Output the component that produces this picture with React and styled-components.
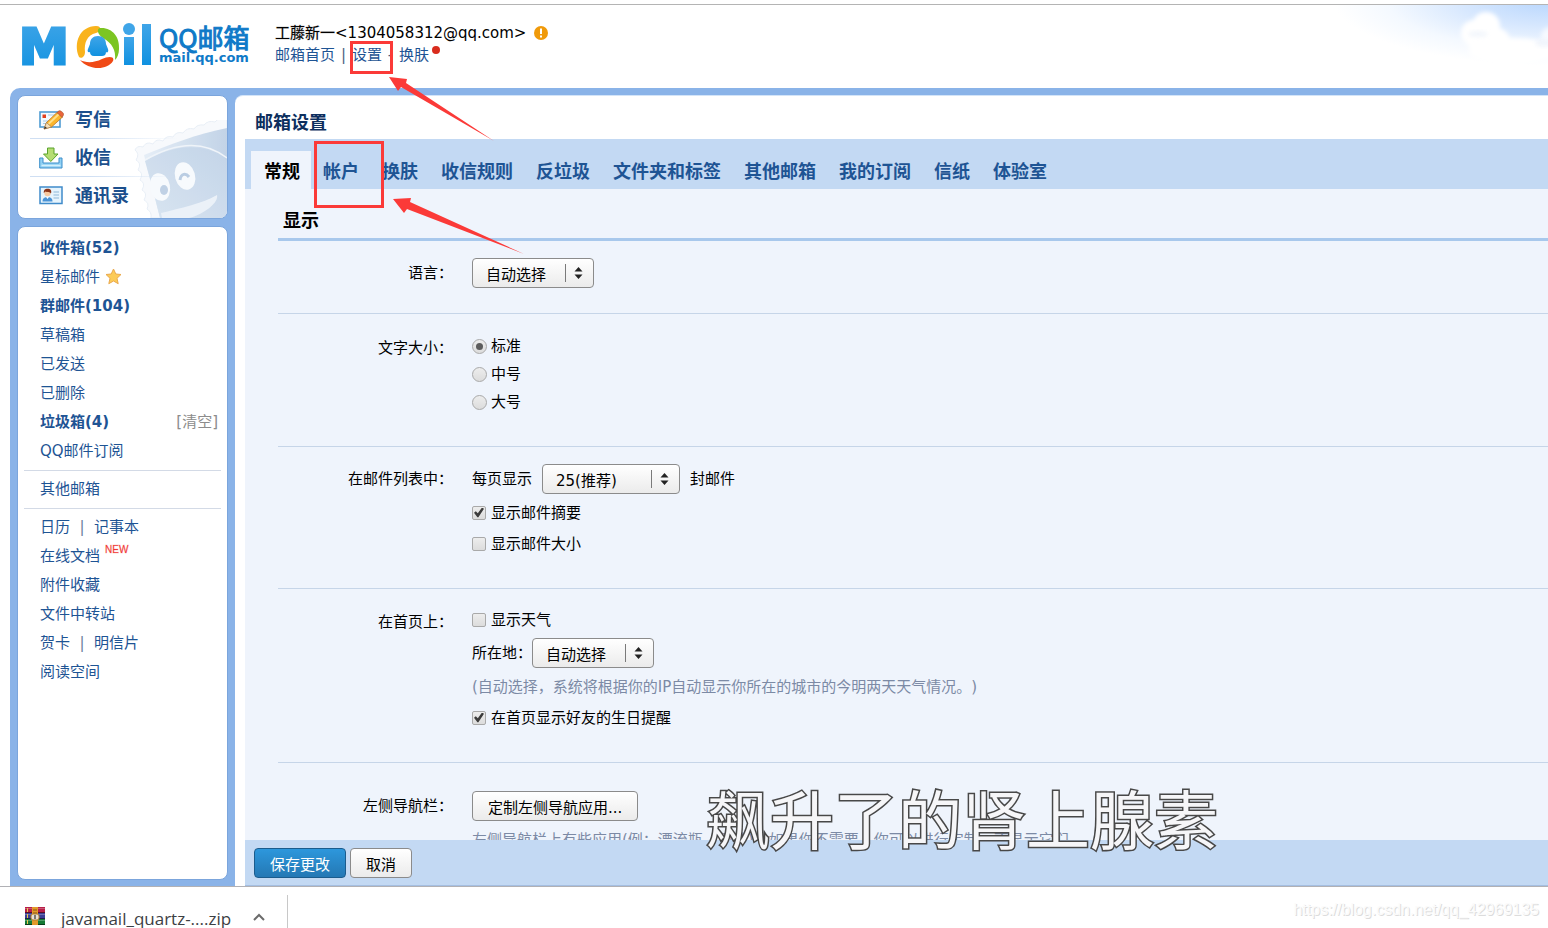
import React from "react";
import styled, { createGlobalStyle } from "styled-components";

const sans = `"DejaVu Sans", "Noto Sans CJK SC", sans-serif`;
const link = "#1e5494";

const GlobalStyle = createGlobalStyle`
  * { box-sizing: border-box; }
  html, body { margin: 0; padding: 0; background: #fff; }
  body { font-family: ${sans}; font-size: 15px; line-height: 22px; color: #000; overflow: hidden; text-spacing-trim: space-all; }
  button, select, input { font-family: inherit; font-size: inherit; margin: 0; }
  ul { list-style: none; margin: 0; padding: 0; }
  h1, h2, p { margin: 0; }
`;

const Page = styled.div`
  position: relative;
  height: 100vh;
  display: flex;
  flex-direction: column;
  padding-top: 4px;
`;

/* header */
const Header = styled.header`
  position: relative;
  display: flex;
  gap: 24px;
  height: 84px;
  flex: none;
  padding: 17px 0 0 20px;
  border-top: 1px solid #b4b4b4;
`;
const Sky = styled.svg`
  position: absolute;
  top: 0;
  right: 0;
  width: 220px;
  height: 70px;
`;
const Logo = styled.a`
  position: relative;
  display: flex;
  gap: 7px;
  width: 231px;
  text-decoration: none;
  color: #0f7ac8;
`;
const LogoWords = styled.span`
  display: flex;
  flex-direction: column;
  white-space: nowrap;
`;
const LogoName = styled.span`
  font: 400 26px/29px "Noto Sans CJK SC", sans-serif;
  -webkit-text-stroke: 1px #0f7ac8;
`;
const LogoHost = styled.span`
  font: bold 13px/14px ${sans};
`;
const Account = styled.div`
  position: relative;
  display: flex;
  flex-direction: column;
`;
const AccountLine = styled.div`
  display: flex;
  align-items: center;
  height: 22px;
  white-space: nowrap;
`;
const Nickname = styled.span`
  -webkit-text-stroke: 1px #00000033;
`;
const WarnIcon = styled.svg`
  margin-left: 8px;
`;
const TextLink = styled.a`
  color: ${(p) => (p.$muted ? "#8c8c8c" : link)};
  font-weight: ${(p) => (p.$bold ? "bold" : "normal")};
  text-decoration: none;
  white-space: nowrap;
`;
const Sep = styled.span`
  width: 17px;
  text-align: center;
  color: #4a5e82;
`;
const RedDot = styled.span`
  width: 8px;
  height: 8px;
  margin: 0 0 10px 3px;
  border-radius: 50%;
  background: #d92c1d;
`;

/* frame */
const Frame = styled.div`
  flex: 1;
  min-height: 0;
  display: flex;
  margin-left: 10px;
  padding-top: 7px;
  background: #8ab3e8;
  border-top-left-radius: 10px;
`;
const Sidebar = styled.aside`
  width: 225px;
  flex: none;
  display: flex;
  flex-direction: column;
  gap: 7px;
  padding: 0 7px 6px;
`;
const Panel = styled.div`
  position: relative;
  background: #fff;
  border: 1px solid #7ba5dc;
  border-radius: 8px;
  overflow: hidden;
`;
const ActionPanel = styled(Panel)`
  height: 124px;
  flex: none;
  padding: 5px 0 0 12px;
`;
const Stamp = styled.svg`
  position: absolute;
  right: 0;
  bottom: 0;
  opacity: 0.9;
`;
const Action = styled.a`
  position: relative;
  display: flex;
  align-items: center;
  gap: 11px;
  height: 38px;
  padding-left: 9px;
  font-size: 18px;
  font-weight: bold;
  color: #1c4f8c;
  text-decoration: none;
  border-bottom: 1px solid transparent;
  border-image: ${(p) => (p.$last ? "none" : "linear-gradient(90deg, #cfdff3 30%, transparent 75%) 1")};
`;
const FolderPanel = styled(Panel)`
  flex: 1;
  padding: 6px;
`;
const FolderGroup = styled.ul`
  & + & {
    margin-top: 5px;
    padding-top: 3px;
    border-top: 1px solid #d3dae6;
  }
`;
const Folder = styled.li`
  display: flex;
  align-items: center;
  height: 29px;
  padding: 0 3px 0 16px;
`;
const Spacer = styled.span`
  flex: 1;
`;
const Pipe = styled.span`
  width: 24px;
  text-align: center;
  color: #6d7f9c;
`;
const NewTag = styled.sup`
  margin: 0 0 12px 5px;
  font: 10px/12px "Liberation Sans", sans-serif;
  color: #f03a34;
  -webkit-text-stroke: 1px #f03a3433;
`;

/* settings */
const Main = styled.main`
  flex: 1;
  min-width: 0;
  display: flex;
  flex-direction: column;
  padding-left: 10px;
  background: #fff;
  border-top: 1px solid #d3e4f8;
  border-top-left-radius: 8px;
`;
const Title = styled.h1`
  padding: 10px 0 0 10px;
  height: 43px;
  flex: none;
  font-size: 18px;
  line-height: 33px;
  color: #0d2f5e;
`;
const Tabs = styled.nav`
  display: flex;
  align-items: flex-end;
  height: 50px;
  flex: none;
  padding-left: 6px;
  background: #c3d9f3;
`;
const Tab = styled.a`
  height: 38px;
  padding: 0 11px 0 13px;
  margin-right: -1px;
  font-size: 18px;
  line-height: 41px;
  font-weight: bold;
  white-space: nowrap;
  text-decoration: none;
  color: ${(p) => (p.$active ? "#000" : link)};
  background: ${(p) => (p.$active ? "#eff4fc" : "transparent")};
`;
const Scroll = styled.div`
  flex: 1;
  min-height: 0;
  overflow: hidden;
  padding-left: 33px;
  background: #eff4fc;
`;
const SectionTitle = styled.h2`
  height: 52px;
  padding: 15px 0 0 5px;
  font-size: 18px;
  line-height: 34px;
  border-bottom: 3px solid #a8c8ec;
`;
const Row = styled.section`
  display: flex;
  gap: 19px;
  padding: ${(p) => p.$top}px 0 ${(p) => p.$bottom}px;
  border-bottom: 1px solid #c6d5e8;
`;
const RowLabel = styled.div`
  width: 175px;
  flex: none;
  text-align: right;
  line-height: 37px;
`;
const Fields = styled.div`
  flex: 1;
  min-width: 0;
  padding-top: ${(p) => p.$offset || 0}px;
`;
const Line = styled.div`
  display: flex;
  align-items: center;
  height: ${(p) => p.$h || 31}px;
  white-space: nowrap;
`;
const Hint = styled(Line).attrs({ as: "p" })`
  color: #7c8aa5;
`;
const Choice = styled.label`
  display: flex;
  align-items: center;
  gap: ${(p) => (p.$radio ? 4 : 5)}px;
  line-height: 24px;
`;
const Radio = styled.input.attrs({ type: "radio" })`
  appearance: none;
  width: 15px;
  height: 15px;
  border: 1px solid #a9a9a9;
  border-radius: 50%;
  background: linear-gradient(#ededed, #dcdcdc);
  display: grid;
  place-items: center;
  &:checked::before {
    content: "";
    width: 7px;
    height: 7px;
    border-radius: 50%;
    background: #5c5c5c;
  }
`;
const Check = styled.input.attrs({ type: "checkbox" })`
  appearance: none;
  width: 14px;
  height: 14px;
  border: 1px solid #a9a9a9;
  border-radius: 2px;
  background: linear-gradient(#ededed, #dcdcdc);
  display: grid;
  place-items: center;
  &:checked::before {
    content: "";
    width: 10px;
    height: 10px;
    background: #3c3c3c;
    clip-path: polygon(0 52%, 18% 38%, 38% 58%, 80% 0, 100% 12%, 44% 98%, 34% 98%);
  }
`;
const Picker = styled.span`
  position: relative;
  width: ${(p) => p.$w}px;
  margin: 0 10px 0 ${(p) => (p.$after ? 10 : 0)}px;
`;
const Select = styled.select`
  appearance: none;
  display: block;
  width: 100%;
  height: 30px;
  padding: 3px 32px 0 13px;
  line-height: 26px;
  color: #000;
  border: 1px solid #8b8b8b;
  border-radius: 4px;
  background: linear-gradient(#fff, #ebebeb);
`;
const PickerMark = styled.svg`
  position: absolute;
  top: 6px;
  right: 10px;
  pointer-events: none;
`;
const Button = styled.button`
  height: 30px;
  padding: 4px 15px 0;
  line-height: 25px;
  border-radius: 4px;
  white-space: nowrap;
  color: ${(p) => (p.$primary ? "#fff" : "#000")};
  border: 1px solid ${(p) => (p.$primary ? "#1b5c8d" : "#8b8b8b")};
  background: ${(p) => (p.$primary ? "linear-gradient(#2d97dc, #2478b4)" : "linear-gradient(#fff, #ebebeb)")};
`;
const Toolbar = styled.div`
  display: flex;
  gap: 4px;
  height: 46px;
  flex: none;
  padding: 8px 9px;
  background: #c3d9f3;
  border-bottom: 1px solid #a5bfe2;
`;

/* browser download shelf */
const Shelf = styled.footer`
  display: flex;
  height: 42px;
  flex: none;
  overflow: hidden;
  border-top: 1px solid #b1b1b5;
  background: #fff;
`;
const Download = styled.button`
  display: flex;
  align-items: flex-start;
  width: 288px;
  height: 60px;
  margin-top: 8px;
  padding: 11px 0 0 25px;
  border: 0;
  border-right: 1px solid #c8c8c8;
  background: none;
  font: 17px/26px "Open Sans", "Noto Sans", sans-serif;
  color: #3c4043;
  text-align: left;
`;
const FileName = styled.span`
  width: 168px;
  margin-left: 16px;
  white-space: nowrap;
`;
const Chevron = styled.svg`
  margin: 6px 0 0 23px;
`;

/* things drawn over the page */
const Marks = styled.svg`
  position: absolute;
  left: 0;
  top: 0;
  pointer-events: none;
`;
const Caption = styled.div`
  position: absolute;
  left: 706px;
  bottom: 64px;
  font: 64px/96px "Noto Sans CJK SC", sans-serif;
  white-space: nowrap;
  color: #f6f6f8;
  paint-order: stroke fill;
  -webkit-text-stroke: 3px #484848;
  pointer-events: none;
`;
const Credit = styled.div`
  position: absolute;
  right: 9px;
  bottom: 7px;
  font: 16px/22px "Liberation Sans", sans-serif;
  color: #fbfbfb;
  text-shadow: 1px 1px 0 #dcdcdc;
`;

const MailMark = () => (
  <svg width="132" height="48" viewBox="0 0 132 48" aria-hidden="true">
    <defs>
      <linearGradient id="mk" x1="0" y1="0" x2="0" y2="1">
        <stop offset="0" stopColor="#3fa5e8" />
        <stop offset="1" stopColor="#1091e0" />
      </linearGradient>
    </defs>
    <text x="-1" y="42" fontFamily="DejaVu Sans, sans-serif" fontWeight="bold" fontSize="50" fill="url(#mk)" stroke="url(#mk)" strokeWidth="3">M</text>
    <circle cx="78" cy="24" r="25" fill="#fff" />
    <path d="M59 35C53 21 60 4 76 4C83 4 80 10 76 11C67 13 64 21 65 30C65 35 61 37 59 35Z" fill="#f9b31c" />
    <path d="M80 6C92 5 100 15 99 27C99 32 97 36 95 38C96 28 92 21 83 16C78 13 76 7 80 6Z" fill="#7cc522" />
    <path d="M60 38C66 41 74 41 82 37C88 34 95 34 93 39C87 49 68 48 60 38Z" fill="#f04a16" />
    <path d="M78 14C83 14 86 17 86 22L88 27C89 30 87 31 86 30C86 33 84 34 82 34H74C71 34 70 32 70 30C68 31 67 29 68 27L70 22C70 17 73 14 78 14Z" fill="url(#mk)" />
    <circle cx="109" cy="7" r="6" fill="#3fa5e8" />
    <rect x="104" y="15" width="10" height="28" fill="url(#mk)" />
    <rect x="122" y="2" width="9" height="41" fill="url(#mk)" />
  </svg>
);

const ComposeIcon = () => (
  <svg width="25" height="20" viewBox="0 0 25 20" aria-hidden="true">
    <rect x="1" y="2" width="20" height="15" fill="#f4fafe" stroke="#4f9cd3" strokeWidth="1.6" />
    <rect x="3.500" y="4.500" width="3.500" height="3.500" fill="#e2401e" />
    <path d="M9 5h7M4 11h5M4 13.500h4" stroke="#a9cbe6" />
    <path d="M5 19L7.500 12.500L18 2.500L23.500 7L12.500 17Z" fill="#fbb62d" stroke="#bb7423" strokeWidth=".8" />
    <path d="M9.500 14L20 4" stroke="#ffe08a" strokeWidth="1.800" />
    <path d="M18 2.500L20 .8C21 0 25.500 3 24.500 5L23 7.500Z" fill="#e9653c" stroke="#a3542d" strokeWidth=".6" />
    <path d="M5 19L7.500 12.500L12.500 17Z" fill="#f6dfb8" stroke="#977044" strokeWidth=".6" />
    <path d="M5 19L6 16.500L8 18Z" fill="#333" />
  </svg>
);
const InboxIcon = () => (
  <svg width="25" height="22" viewBox="0 0 25 22" aria-hidden="true">
    <path d="M.7 11H4V16H20V11H23V21H.7Z" fill="#8fd0f3" stroke="#3c8fcb" />
    <path d="M2.500 18.500H21.500" stroke="#d4effc" strokeWidth="1.500" />
    <path d="M8.500 1H15V7H19L11.800 14.500L4.500 7H8.500Z" fill="#b5dd73" stroke="#5aa32c" />
  </svg>
);
const ContactsIcon = () => (
  <svg width="25" height="19" viewBox="0 0 25 19" aria-hidden="true">
    <rect x="1" y="1" width="22" height="16.500" fill="#e6f4fd" stroke="#3f8bca" strokeWidth="1.500" />
    <circle cx="8.500" cy="7" r="3.200" fill="#f7c9a0" />
    <path d="M4.800 7C4.500 3 7 2.500 9 2.700C12 2.700 12.800 5 12 7.500C11 5.500 8 6.500 6.500 5.500Z" fill="#8b3418" />
    <path d="M3.500 15.500C3.500 12 6 11 8.500 11S13.500 12 13.500 15.500Z" fill="#4a93d6" />
    <path d="M7 11L8.500 13L10 11Z" fill="#fff" />
    <path d="M14.500 6H20M14.500 9H20M14.500 12H20" stroke="#8fb8d8" />
  </svg>
);

const StampArt = () => (
  <Stamp width="96" height="98" viewBox="0 0 96 98" aria-hidden="true">
    <defs>
      <linearGradient id="st" x1="0" y1="0" x2="1" y2="0">
        <stop offset="0" stopColor="#e3ecf6" />
        <stop offset="1" stopColor="#bccfe5" />
      </linearGradient>
      <linearGradient id="pg" x1="0" y1="1" x2="1" y2="0">
        <stop offset="0" stopColor="#d5e2f0" />
        <stop offset="1" stopColor="#bdd0e6" />
      </linearGradient>
    </defs>
    <path d="M4 30Q6 25 12 27Q15 21 22 24Q25 18 32 21Q35 15 42 17Q45 11 52 13Q56 7 63 9Q66 4 73 5Q77 0 84 2Q88 -3 96 -2V98H20Q21 92 16 89Q19 83 13 80Q17 73 11 70Q15 63 9 60Q13 53 7 50Q11 43 5 40Q9 34 4 30Z" fill="#f7f9fc" stroke="#e6edf5" />
    <path d="M13 35C40 24 66 14 96 8V98H29Z" fill="url(#st)" />
    <path d="M14 41C40 26 70 20 96 40V98H29L22 70Z" fill="url(#pg)" />
    <path d="M14 40C40 25 70 18 96 38" stroke="#eef3f9" strokeWidth="1.500" fill="none" />
    <path d="M30 93C50 88 70 84 86 75C88 82 74 94 58 98H31Z" fill="#e9f0f8" />
    <ellipse cx="29" cy="67" rx="10" ry="14" transform="rotate(-12 29 67)" fill="#f7fafd" />
    <ellipse cx="54" cy="56" rx="10" ry="14" transform="rotate(-16 54 56)" fill="#f7fafd" />
    <ellipse cx="33" cy="70" rx="4" ry="5" fill="#bacde3" />
    <path d="M49 60C50 53 55 53 58 57" stroke="#b3c8e0" strokeWidth="3" fill="none" />
  </Stamp>
);

const StarSvg = styled.svg`
  margin-left: 5px;
`;
const StarIcon = () => (
  <StarSvg width="17" height="17" viewBox="0 0 17 17" aria-hidden="true">
    <path d="M8.500 1L10.800 6L16 6.500L12 10.300L13.200 15.700L8.500 13L3.800 15.700L5 10.300L1 6.500L6.200 6Z" fill="#fccb57" stroke="#eaa94d" />
  </StarSvg>
);

const WinrarIcon = () => (
  <svg width="20" height="20" viewBox="0 0 20 20" aria-hidden="true">
    <rect y="1" width="20" height="6" fill="#b81f48" />
    <rect y="7" width="20" height="6" fill="#3c3f96" />
    <rect y="13" width="20" height="6" fill="#167a35" />
    <path d="M0 2.500H20M0 8.500H20M0 14.500H20" stroke="#fff" strokeOpacity=".25" />
    <path d="M0 6.500H20M0 12.500H20M0 18.500H20" stroke="#000" strokeOpacity=".5" />
    <path d="M2.500 2V6M2.500 8V12M2.500 14V18" stroke="#e9c94f" />
    <rect x="7" y="1" width="6" height="18" fill="#e29a2a" />
    <path d="M8 4H12M8 7H12" stroke="#8c5210" />
    <rect x="6" y="8" width="8" height="6" rx="2" fill="#e8e0d4" stroke="#b07c2c" />
    <path d="M10 9V13" stroke="#555" strokeWidth="1.500" />
  </svg>
);

const Dropdown = ({ label, value, w, after }) => (
  <Picker $w={w} $after={after}>
    <Select aria-label={label} defaultValue={value}>
      <option>{value}</option>
    </Select>
    <PickerMark width="20" height="18" viewBox="0 0 20 18" aria-hidden="true">
      <path d="M1.500 0V18" stroke="#7a7a7a" />
      <path d="M10.500 7.500L14.500 3L18.500 7.500ZM10.500 10.500L14.500 15L18.500 10.500Z" fill="#222" />
    </PickerMark>
  </Picker>
);

const tabs = ["常规", "帐户", "换肤", "收信规则", "反垃圾", "文件夹和标签", "其他邮箱", "我的订阅", "信纸", "体验室"];

export default function App() {
  return (
    <Page>
      <GlobalStyle />
      <Header>
        <Sky viewBox="0 0 220 70" aria-hidden="true">
          <defs>
            <radialGradient id="sky" gradientUnits="userSpaceOnUse" cx="0" cy="0" r="1" gradientTransform="translate(220 -6) scale(215 66)">
              <stop offset="0" stopColor="#b6d5fd" />
              <stop offset=".4" stopColor="#d6e7fe" />
              <stop offset=".75" stopColor="#f4f9ff" />
              <stop offset="1" stopColor="#fff" />
            </radialGradient>
            <filter id="soft"><feGaussianBlur stdDeviation="2" /></filter>
          </defs>
          <rect width="220" height="70" fill="url(#sky)" />
          <g filter="url(#soft)" fill="#fff">
            <circle cx="158" cy="21" r="14" />
            <circle cx="146" cy="28" r="13" />
            <ellipse cx="160" cy="35" rx="22" ry="14" />
            <ellipse cx="185" cy="46" rx="44" ry="13" />
            <circle cx="222" cy="31" r="9" opacity=".7" />
          </g>
          <g filter="url(#soft)" fill="#e9f0fa" opacity=".6">
            <ellipse cx="150" cy="29" rx="10" ry="3" />
            <ellipse cx="216" cy="38" rx="9" ry="4" />
          </g>
        </Sky>
        <Logo href="#" aria-label="Mail QQ邮箱">
          <MailMark />
          <LogoWords>
            <LogoName>QQ邮箱</LogoName>
            <LogoHost>mail.qq.com</LogoHost>
          </LogoWords>
        </Logo>
        <Account>
          <AccountLine>
            <Nickname>工藤新一</Nickname>
            <span>&lt;1304058312@qq.com&gt;</span>
            <WarnIcon width="14" height="14" viewBox="0 0 14 14" aria-hidden="true">
              <circle cx="7" cy="7" r="7" fill="#f09a0a" />
              <path d="M7 2.500V8M7 9.500V11.500" stroke="#fff" strokeWidth="2" />
            </WarnIcon>
          </AccountLine>
          <AccountLine>
            <TextLink href="#">邮箱首页</TextLink>
            <Sep>|</Sep>
            <TextLink href="#">设置</TextLink>
            <Sep>-</Sep>
            <TextLink href="#">换肤</TextLink>
            <RedDot />
          </AccountLine>
        </Account>
      </Header>

      <Frame>
        <Sidebar>
          <ActionPanel>
            <StampArt />
            <Action href="#"><ComposeIcon />写信</Action>
            <Action href="#"><InboxIcon />收信</Action>
            <Action href="#" $last><ContactsIcon />通讯录</Action>
          </ActionPanel>
          <FolderPanel as="nav">
            <FolderGroup>
              <Folder><TextLink href="#" $bold>收件箱(52)</TextLink></Folder>
              <Folder><TextLink href="#">星标邮件</TextLink><StarIcon /></Folder>
              <Folder><TextLink href="#" $bold>群邮件(104)</TextLink></Folder>
              <Folder><TextLink href="#">草稿箱</TextLink></Folder>
              <Folder><TextLink href="#">已发送</TextLink></Folder>
              <Folder><TextLink href="#">已删除</TextLink></Folder>
              <Folder>
                <TextLink href="#" $bold>垃圾箱(4)</TextLink>
                <Spacer />
                <TextLink href="#" $muted>[清空]</TextLink>
              </Folder>
              <Folder><TextLink href="#">QQ邮件订阅</TextLink></Folder>
            </FolderGroup>
            <FolderGroup>
              <Folder><TextLink href="#">其他邮箱</TextLink></Folder>
            </FolderGroup>
            <FolderGroup>
              <Folder><TextLink href="#">日历</TextLink><Pipe>|</Pipe><TextLink href="#">记事本</TextLink></Folder>
              <Folder><TextLink href="#">在线文档</TextLink><NewTag>NEW</NewTag></Folder>
              <Folder><TextLink href="#">附件收藏</TextLink></Folder>
              <Folder><TextLink href="#">文件中转站</TextLink></Folder>
              <Folder><TextLink href="#">贺卡</TextLink><Pipe>|</Pipe><TextLink href="#">明信片</TextLink></Folder>
              <Folder><TextLink href="#">阅读空间</TextLink></Folder>
            </FolderGroup>
          </FolderPanel>
        </Sidebar>

        <Main>
          <Title>邮箱设置</Title>
          <Tabs>
            {tabs.map((t, i) => (
              <Tab key={t} href="#" $active={i === 0}>{t}</Tab>
            ))}
          </Tabs>
          <Scroll>
            <SectionTitle>显示</SectionTitle>
            <Row $top={14} $bottom={21}>
              <RowLabel>语言：</RowLabel>
              <Fields>
                <Line $h={36}><Dropdown label="语言" value="自动选择" w={122} /></Line>
              </Fields>
            </Row>
            <Row $top={16} $bottom={30}>
              <RowLabel>文字大小：</RowLabel>
              <Fields $offset={2}>
                {["标准", "中号", "大号"].map((t, i) => (
                  <Line $h={28} key={t}>
                    <Choice $radio><Radio name="size" defaultChecked={i === 0} />{t}</Choice>
                  </Line>
                ))}
              </Fields>
            </Row>
            <Row $top={14} $bottom={29}>
              <RowLabel>在邮件列表中：</RowLabel>
              <Fields>
                <Line $h={36}>
                  每页显示<Dropdown label="每页显示" value="25(推荐)" w={138} after />封邮件
                </Line>
                <Line><Choice><Check defaultChecked />显示邮件摘要</Choice></Line>
                <Line><Choice><Check />显示邮件大小</Choice></Line>
              </Fields>
            </Row>
            <Row $top={15} $bottom={29}>
              <RowLabel>在首页上：</RowLabel>
              <Fields>
                <Line><Choice><Check />显示天气</Choice></Line>
                <Line $h={36}>所在地：<Dropdown label="所在地" value="自动选择" w={122} /></Line>
                <Hint>(自动选择，系统将根据你的IP自动显示你所在的城市的今明两天天气情况。)</Hint>
                <Line><Choice><Check defaultChecked />在首页显示好友的生日提醒</Choice></Line>
              </Fields>
            </Row>
            <Row $top={25} $bottom={29}>
              <RowLabel>左侧导航栏：</RowLabel>
              <Fields>
                <Line $h={36}><Button type="button">定制左侧导航应用...</Button></Line>
                <Hint>左侧导航栏上有些应用(例：漂流瓶、阅读)，如果你不需要，你可以进行定制，不显示它们。</Hint>
              </Fields>
            </Row>
          </Scroll>
          <Toolbar>
            <Button type="button" $primary>保存更改</Button>
            <Button type="button">取消</Button>
          </Toolbar>
        </Main>
      </Frame>

      <Shelf>
        <Download type="button">
          <WinrarIcon />
          <FileName>javamail_quartz-....zip</FileName>
          <Chevron width="14" height="10" viewBox="0 0 14 10" aria-hidden="true">
            <path d="M2 8L7 3L12 8" fill="none" stroke="#6b6b6b" strokeWidth="2" />
          </Chevron>
        </Download>
      </Shelf>

      <Marks width="560" height="270" viewBox="0 0 560 270" aria-hidden="true">
        <g fill="none" stroke="#fb3a38" strokeWidth="3">
          <rect x="351.500" y="42.500" width="40" height="30" />
          <rect x="315.500" y="142.500" width="67" height="64" />
        </g>
        <g fill="#fb3a38">
          <path d="M389 77L407 79L406 83L494 141L401 87L398 91Z" />
          <path d="M393 199L411 198L410 202L524 254L407 209L404 213Z" />
        </g>
      </Marks>
      <Caption>飙升了的肾上腺素</Caption>
      <Credit>https://blog.csdn.net/qq_42969135</Credit>
    </Page>
  );
}
